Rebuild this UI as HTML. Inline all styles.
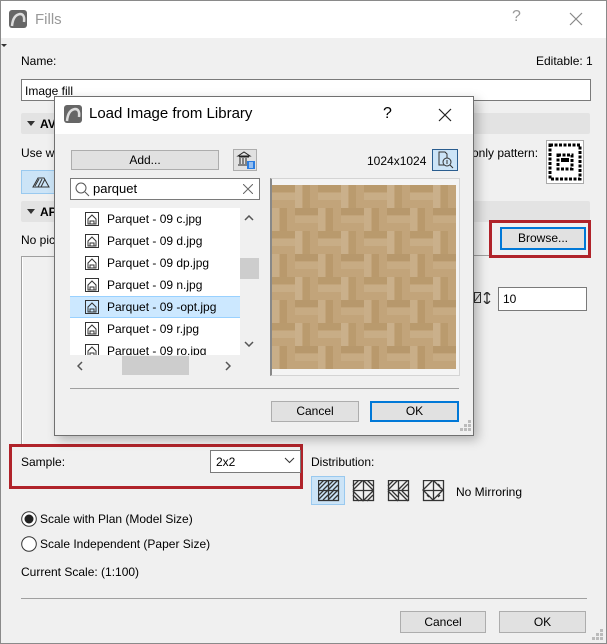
<!DOCTYPE html>
<html><head><meta charset="utf-8"><style>
*{box-sizing:border-box;margin:0;padding:0}
body{width:607px;height:644px;overflow:hidden;background:#f0f0f0;font-family:"Liberation Sans",sans-serif;font-size:12px;color:#000;position:relative}
.a{position:absolute}
.t{position:absolute;white-space:nowrap;line-height:14px}
.btn{position:absolute;background:#e1e1e1;border:1px solid #adadad;text-align:center;font-size:12px}
.inp{position:absolute;background:#fff;border:1px solid #7a7a7a}
.bar{position:absolute;background:#e3e3e3;border-radius:2px}
.tri{position:absolute;width:0;height:0;border-left:4px solid transparent;border-right:4px solid transparent;border-top:5px solid #333}
.row{position:absolute;left:0;width:170px;height:22px}
.row span{position:absolute;left:37px;top:4px;font-size:12px}
.row svg{position:absolute;left:15px;top:4px}
</style></head><body>
<div class="a" style="left:0;top:0;width:607px;height:644px;border:1px solid #8a8a8a"></div>
<div class="a" style="left:1px;top:1px;width:605px;height:37px;background:#fff"></div>
<svg class="a" style="left:9px;top:10px" width="18" height="18"><rect width="18" height="18" rx="3" fill="#666"/><path d="M3 16 Q4 5 11 4 Q16 4 15 12" stroke="#ddd" stroke-width="2.5" fill="none"/></svg>
<div class="t" style="left:35px;top:11px;font-size:15px;color:#999;line-height:17px">Fills</div>
<div class="t" style="left:512px;top:10px;font-size:16px;color:#999">?</div>
<svg class="a" style="left:569px;top:12px" width="14" height="14"><path d="M1 1L13 13M13 1L1 13" stroke="#888" stroke-width="1.2"/></svg>
<div class="tri" style="left:1px;top:44px;border-width:3px 3px 0 3px"></div>

<div class="t" style="left:21px;top:54px">Name:</div>
<div class="t" style="left:536px;top:54px">Editable: 1</div>
<div class="inp" style="left:21px;top:79px;width:570px;height:22px"></div>
<div class="t" style="left:25px;top:84px">Image fill</div>
<div class="bar" style="left:21px;top:113px;width:569px;height:21px"></div>
<div class="tri" style="left:27px;top:121px"></div>
<div class="t" style="left:40px;top:117px;font-weight:bold">AV</div>
<div class="t" style="left:21px;top:146px">Use wi</div>
<div class="t" style="left:472px;top:146px">only pattern:</div>
<div class="a" style="left:546px;top:140px;width:38px;height:44px;background:#fff;border:1px solid #aaa"></div>
<svg class="a" style="left:548px;top:143px" width="34" height="38"><g fill="none" stroke="#000" stroke-width="3" stroke-dasharray="3 1.5"><rect x="2" y="2" width="30" height="34"/><rect x="10" y="12" width="14" height="14"/></g><rect x="13" y="15" width="8" height="4" fill="#000"/></svg>
<div class="a" style="left:21px;top:170px;width:35px;height:24px;background:#cce4f7;border:1px solid #99c9ef"></div>
<svg class="a" style="left:32px;top:175px" width="18" height="14"><path d="M1 12L6 3H12L17 12Z" fill="none" stroke="#333"/><path d="M3 11L7 4M6 12L10 4M9 12L13 4" stroke="#333"/></svg>
<div class="bar" style="left:21px;top:201px;width:569px;height:21px"></div>
<div class="tri" style="left:27px;top:209px"></div>
<div class="t" style="left:40px;top:205px;font-weight:bold">AP</div>
<div class="t" style="left:21px;top:233px">No pic</div>
<div class="a" style="left:472px;top:255px;width:20px;height:1px;background:#a0a0a0"></div>
<div class="a" style="left:489px;top:220px;width:102px;height:38px;border:3px solid #b0232a"></div>
<div class="btn" style="left:500px;top:227px;width:86px;height:23px;border:2px solid #0078d7;line-height:19px">Browse...</div>
<div class="a" style="left:21px;top:256px;width:2px;height:188px;border-left:1px solid #a0a0a0;border-right:1px solid #fff"></div>
<div class="a" style="left:21px;top:256px;width:40px;height:1px;background:#a0a0a0"></div>
<svg class="a" style="left:474px;top:292px" width="18" height="12"><rect x="0.5" y="0.5" width="6" height="10" fill="none" stroke="#333"/><path d="M1 9L6 2" stroke="#333"/><path d="M13 1V11M10 3L13 0L16 3M10 9L13 12L16 9" stroke="#333" fill="none" stroke-width="1.3"/></svg>
<div class="inp" style="left:498px;top:287px;width:89px;height:24px"></div>
<div class="t" style="left:503px;top:292px">10</div>
<div class="a" style="left:310px;top:434px;width:42px;height:1px;border-top:1px dashed #333"></div>
<div class="a" style="left:356px;top:426px;width:28px;height:10px;border:1px solid #7a7a7a;border-top:none"></div>

<div class="a" style="left:9px;top:444px;width:294px;height:45px;border:3px solid #b0232a"></div>
<div class="t" style="left:21px;top:455px">Sample:</div>
<div class="a" style="left:210px;top:450px;width:91px;height:23px;background:#fff;border:1px solid #7a7a7a"></div>
<div class="t" style="left:216px;top:455px">2x2</div>
<svg class="a" style="left:284px;top:457px" width="11" height="7"><path d="M1 1L5.5 5.5L10 1" stroke="#333" fill="none"/></svg>
<div class="t" style="left:311px;top:455px">Distribution:</div>
<div class="a" style="left:311px;top:476px;width:34px;height:29px;background:#cce4f7;border:1px solid #99c9ef"></div>
<svg class="a" style="left:318px;top:480px" width="150" height="22"><g stroke="#333" fill="none" stroke-width="1.3">
<rect x="0.5" y="0.5" width="20" height="20"/><path d="M10.5 0V21M0 10.5H21M0 6L6 0M0 10L10 0M5 10L10 5M10 6L16 0M10 10L20 0M15 10L20 5M0 16L6 10M0 20L10 10M5 20L10 15M10 16L16 10M10 20L20 10M15 20L20 15"/>
<g transform="translate(35,0)"><rect x="0.5" y="0.5" width="20" height="20"/><path d="M10.5 0V21M0 10.5H21M0 6L6 0M0 10L10 0M10 0L20 10M14 0L20 6M0 15L6 21M0 11L10 21M10 21L20 11M14 21L20 15"/></g>
<g transform="translate(70,0)"><rect x="0.5" y="0.5" width="20" height="20"/><path d="M10.5 0V21M0 10.5H21M0 6L6 0M0 10L10 0M10 10L20 0M14 10L20 4M0 11L10 21M4 11L10 17M10 11L20 21M14 11L20 17"/></g>
<g transform="translate(105,0)"><rect x="0.5" y="0.5" width="20" height="20"/><path d="M10.5 0V21M0 10.5H21M0 10L10 0L20 10L10 20Z M4 6L6 4M15 4L17 6M4 15L6 17M17 15L15 17"/></g>
</g></svg>
<div class="t" style="left:456px;top:485px">No Mirroring</div>
<svg class="a" style="left:21px;top:511px" width="16" height="16"><circle cx="8" cy="8" r="7.3" fill="#fff" stroke="#333"/><circle cx="8" cy="8" r="4.5" fill="#222"/></svg>
<div class="t" style="left:40px;top:512px">Scale with Plan (Model Size)</div>
<svg class="a" style="left:21px;top:536px" width="16" height="16"><circle cx="8" cy="8" r="7.3" fill="#fff" stroke="#333"/></svg>
<div class="t" style="left:40px;top:537px">Scale Independent (Paper Size)</div>
<div class="t" style="left:21px;top:565px">Current Scale: (1:100)</div>
<div class="a" style="left:21px;top:598px;width:566px;height:1px;background:#a0a0a0"></div>
<div class="btn" style="left:400px;top:611px;width:86px;height:22px;line-height:20px">Cancel</div>
<div class="btn" style="left:499px;top:611px;width:87px;height:22px;line-height:20px">OK</div>

<div class="a" style="left:54px;top:96px;width:420px;height:340px;background:#f0f0f0;border:1px solid #707070;box-shadow:4px 4px 10px rgba(0,0,0,.25)"></div>
<div class="a" style="left:55px;top:97px;width:418px;height:37px;background:#fff"></div>
<svg class="a" style="left:64px;top:105px" width="18" height="18"><rect width="18" height="18" rx="3" fill="#666"/><path d="M3 16 Q4 5 11 4 Q16 4 15 12" stroke="#ddd" stroke-width="2.5" fill="none"/></svg>
<div class="t" style="left:89px;top:105px;font-size:15px;line-height:18px">Load Image from Library</div>
<div class="t" style="left:383px;top:105px;font-size:16px;line-height:18px">?</div>
<svg class="a" style="left:438px;top:108px" width="14" height="14"><path d="M1 1L13 13M13 1L1 13" stroke="#222" stroke-width="1.2"/></svg>
<div class="btn" style="left:71px;top:150px;width:148px;height:20px;line-height:18px">Add...</div>
<div class="btn" style="left:233px;top:149px;width:24px;height:22px"></div>
<svg class="a" style="left:236px;top:151px" width="20" height="19"><path d="M2 5L8 1L14 5ZM3 6H13M4 7V13M7 7V13M10 7V13M2 14H11" stroke="#222" fill="none"/><rect x="11" y="10" width="8" height="8" fill="#2b7de0"/><path d="M13 12H17M13 14H17M13 16H17" stroke="#fff"/></svg>
<div class="t" style="left:367px;top:154px">1024x1024</div>
<div class="a" style="left:432px;top:149px;width:26px;height:22px;background:#cce4f7;border:1px solid #2a5d8f"></div>
<svg class="a" style="left:437px;top:151px" width="18" height="18"><path d="M2 1H8L10 3V14H2Z" fill="none" stroke="#333"/><circle cx="10" cy="11" r="4" fill="#cce4f7" stroke="#333"/><path d="M13 14L16 17M10 9V13" stroke="#333"/></svg>
<div class="inp" style="left:70px;top:178px;width:190px;height:22px"></div>
<svg class="a" style="left:75px;top:182px" width="15" height="15"><circle cx="6" cy="6" r="5" fill="none" stroke="#555"/><path d="M10 10L14 14" stroke="#555"/></svg>
<div class="t" style="left:93px;top:182px;font-size:13px">parquet</div>
<svg class="a" style="left:243px;top:184px" width="10" height="10"><path d="M0 0L10 10M10 0L0 10" stroke="#666"/></svg>
<div class="a" style="left:70px;top:208px;width:170px;height:147px;background:#fff;overflow:hidden">
<div class="row" style="top:0"><svg width="14" height="14"><rect x=".5" y=".5" width="13" height="13" fill="none" stroke="#333"/><path d="M3 12V7L7 3L11 7V12ZM5 12V9H9V12" fill="none" stroke="#333"/></svg><span>Parquet - 09 c.jpg</span></div>
<div class="row" style="top:22px"><svg width="14" height="14"><rect x=".5" y=".5" width="13" height="13" fill="none" stroke="#333"/><path d="M3 12V7L7 3L11 7V12ZM5 12V9H9V12" fill="none" stroke="#333"/></svg><span>Parquet - 09 d.jpg</span></div>
<div class="row" style="top:44px"><svg width="14" height="14"><rect x=".5" y=".5" width="13" height="13" fill="none" stroke="#333"/><path d="M3 12V7L7 3L11 7V12ZM5 12V9H9V12" fill="none" stroke="#333"/></svg><span>Parquet - 09 dp.jpg</span></div>
<div class="row" style="top:66px"><svg width="14" height="14"><rect x=".5" y=".5" width="13" height="13" fill="none" stroke="#333"/><path d="M3 12V7L7 3L11 7V12ZM5 12V9H9V12" fill="none" stroke="#333"/></svg><span>Parquet - 09 n.jpg</span></div>
<div class="row" style="top:88px;background:#cce8ff;border-top:1px solid #99d1ff;border-bottom:1px solid #99d1ff"><svg width="14" height="14" style="top:3px"><rect x=".5" y=".5" width="13" height="13" fill="none" stroke="#333"/><path d="M3 12V7L7 3L11 7V12ZM5 12V9H9V12" fill="none" stroke="#333"/></svg><span style="top:3px">Parquet - 09 -opt.jpg</span></div>
<div class="row" style="top:110px"><svg width="14" height="14"><rect x=".5" y=".5" width="13" height="13" fill="none" stroke="#333"/><path d="M3 12V7L7 3L11 7V12ZM5 12V9H9V12" fill="none" stroke="#333"/></svg><span>Parquet - 09 r.jpg</span></div>
<div class="row" style="top:132px"><svg width="14" height="14"><rect x=".5" y=".5" width="13" height="13" fill="none" stroke="#333"/><path d="M3 12V7L7 3L11 7V12ZM5 12V9H9V12" fill="none" stroke="#333"/></svg><span>Parquet - 09 ro.jpg</span></div>
</div>
<div class="a" style="left:240px;top:258px;width:19px;height:21px;background:#cdcdcd"></div>
<svg class="a" style="left:244px;top:215px" width="10" height="6"><path d="M1 5L5 1L9 5" stroke="#555" fill="none" stroke-width="1.5"/></svg>
<svg class="a" style="left:244px;top:341px" width="10" height="6"><path d="M1 1L5 5L9 1" stroke="#555" fill="none" stroke-width="1.5"/></svg>
<div class="a" style="left:122px;top:356px;width:67px;height:19px;background:#cdcdcd"></div>
<svg class="a" style="left:77px;top:361px" width="6" height="10"><path d="M5 1L1 5L5 9" stroke="#555" fill="none" stroke-width="1.5"/></svg>
<svg class="a" style="left:225px;top:361px" width="6" height="10"><path d="M1 1L5 5L1 9" stroke="#555" fill="none" stroke-width="1.5"/></svg>
<div class="a" style="left:270px;top:178px;width:190px;height:198px;background:#f4f4f4;border:1px solid #d4d4d4;border-left:2px solid #888"></div>
<svg class="a" style="left:272px;top:185px" width="184" height="184">
<defs><pattern id="p" width="46" height="46" patternUnits="userSpaceOnUse">
<rect width="46" height="46" fill="#c2a47a"/>
<rect x="0" y="0" width="23" height="7" fill="#b99a6d"/><rect x="0" y="8" width="23" height="7" fill="#c8ad86"/>
<rect x="23" y="0" width="7" height="23" fill="#cab08b"/><rect x="31" y="0" width="7" height="23" fill="#ba9b6e"/>
<rect x="23" y="23" width="23" height="7" fill="#b7986c"/><rect x="23" y="31" width="23" height="7" fill="#c7ab83"/>
<rect x="0" y="23" width="7" height="23" fill="#c9ae88"/><rect x="8" y="23" width="7" height="23" fill="#b9996c"/>
</pattern></defs>
<rect width="184" height="184" fill="url(#p)"/></svg>
<div class="a" style="left:70px;top:388px;width:389px;height:1px;background:#a0a0a0"></div>
<div class="btn" style="left:271px;top:401px;width:88px;height:21px;line-height:19px">Cancel</div>
<div class="btn" style="left:370px;top:401px;width:89px;height:21px;border:2px solid #0078d7;line-height:17px">OK</div>
<svg class="a" style="left:460px;top:420px" width="12" height="12"><g fill="#bbb"><rect x="8" y="0" width="3" height="3"/><rect x="4" y="4" width="3" height="3"/><rect x="8" y="4" width="3" height="3"/><rect x="0" y="8" width="3" height="3"/><rect x="4" y="8" width="3" height="3"/><rect x="8" y="8" width="3" height="3"/></g></svg>
<svg class="a" style="left:592px;top:629px" width="12" height="12"><g fill="#bbb"><rect x="8" y="0" width="3" height="3"/><rect x="4" y="4" width="3" height="3"/><rect x="8" y="4" width="3" height="3"/><rect x="0" y="8" width="3" height="3"/><rect x="4" y="8" width="3" height="3"/><rect x="8" y="8" width="3" height="3"/></g></svg>
</body></html>
